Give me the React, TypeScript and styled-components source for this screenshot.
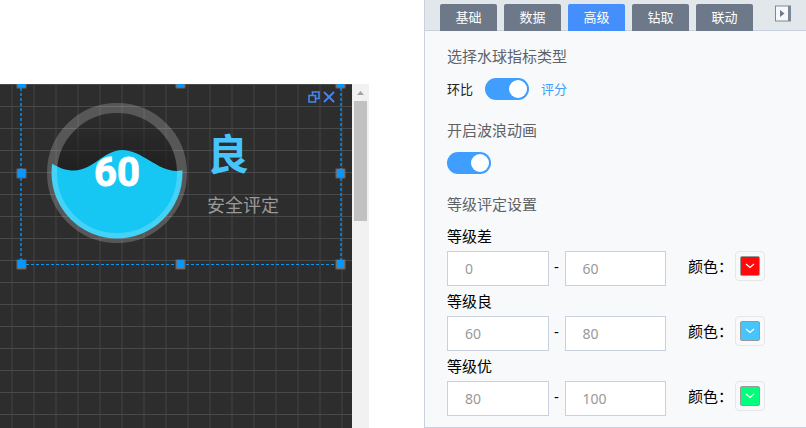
import React, { useState } from "react";
import styled, { createGlobalStyle } from "styled-components";

const GlobalStyle = createGlobalStyle`
  *, *::before, *::after { box-sizing: border-box; }
  body {
    margin: 0;
    background: #fff;
    font-family: "Noto Sans", "Noto Sans CJK SC", sans-serif;
  }
  button, input { font-family: inherit; }
`;

const Page = styled.div`
  display: flex;
  min-height: 100vh;
  overflow: hidden;
`;

const Workspace = styled.main`
  display: flex;
  flex: 1;
  min-width: 0;
  margin: 84px 55px 0 0;
`;

const Canvas = styled.div`
  position: relative;
  flex: 1;
  overflow: hidden;
  background-color: #2d2d2d;
  background-image:
    linear-gradient(to bottom, #494949 1px, transparent 1px),
    linear-gradient(to right, #383838 2px, transparent 2px);
  background-size: 22px 22px;
  background-position: 0 0, 11px 0;
`;

const Selection = styled.section`
  position: absolute;
  left: 20px;
  top: -2px;
  width: 322px;
  height: 182px;
`;

const Outline = styled.svg`
  position: absolute;
  inset: 0;
  width: 100%;
  height: 100%;
  overflow: visible;
`;

const WidgetBody = styled.div`
  display: flex;
  align-items: center;
  gap: 20px;
  height: 100%;
  padding-left: 27px;
`;

const Gauge = styled.svg`
  flex: none;
  width: 140px;
  height: 140px;
`;

const GaugeValue = styled.text`
  font-family: Roboto, sans-serif;
  font-size: 40px;
  font-weight: 700;
  fill: #fff;
  stroke: #fff;
  stroke-width: 1px;
  text-anchor: middle;
`;

const Rating = styled.div`
  display: flex;
  flex-direction: column;
  gap: 16px;
  padding-bottom: 2px;
  font-family: "Noto Sans CJK SC", sans-serif;
`;

const Grade = styled.strong`
  font-size: 42px;
  line-height: 48px;
  color: #48c4fd;
`;

const Caption = styled.span`
  font-size: 18px;
  line-height: 24px;
  color: #999;
`;

const WidgetActions = styled.div`
  position: absolute;
  top: 9px;
  right: 7px;
  display: flex;
  gap: 3px;
`;

const IconButton = styled.button`
  display: flex;
  padding: 0;
  border: 0;
  background: none;
  color: #4486f6;
  cursor: pointer;
`;

const ScrollTrack = styled.div`
  flex: none;
  display: flex;
  flex-direction: column;
  align-items: center;
  width: 17px;
  background: #f1f1f1;
`;

const ScrollArrow = styled.svg`
  width: 17px;
  height: 17px;
`;

const ScrollThumb = styled.div`
  width: 13px;
  height: 120px;
  background: #c1c1c1;
`;

const Panel = styled.aside`
  flex: none;
  width: 382px;
  border: solid #c9d1de;
  border-width: 0 0 1px 1px;
  background: #f7f9fb;
`;

const PanelHeader = styled.header`
  display: flex;
  justify-content: space-between;
  height: 31px;
  padding: 4px 15px 0;
  border-bottom: 1px solid #c9d1de;
  background: #e2e7eb;
`;

const TabList = styled.nav`
  display: flex;
  gap: 7px;
  height: 27px;
`;

const Tab = styled.button<{ $active: boolean }>`
  width: 57px;
  padding: 0;
  border: 0;
  border-radius: 2px 2px 0 0;
  background: ${(p) => (p.$active ? "#458ffc" : "#6d7989")};
  color: #fff;
  font-size: 13px;
  line-height: 27px;
  cursor: pointer;
`;

const CollapseButton = styled(IconButton)`
  align-self: flex-start;
  margin-top: 1px;
`;

const PanelBody = styled.div`
  padding: 13px 41px 11px 22px;
`;

const Group = styled.section`
  margin-bottom: 18px;

  &:last-child { margin-bottom: 0; }
`;

const Heading = styled.h2`
  margin: 0 0 10px;
  font-size: 15px;
  font-weight: 400;
  line-height: 24px;
  color: #606266;
`;

const SwitchRow = styled.div`
  display: flex;
  align-items: center;
  height: 22px;
  gap: 12px;
`;

const SwitchText = styled.label<{ $on?: boolean }>`
  font-size: 13px;
  line-height: 22px;
  color: ${(p) => (p.$on ? "#409eff" : "#222")};
`;

const Switch = styled.input`
  appearance: none;
  display: flex;
  align-items: center;
  width: 44px;
  height: 22px;
  margin: 0;
  padding: 0 2px;
  border-radius: 11px;
  background: #c0ccda;
  cursor: pointer;

  &::before {
    content: "";
    width: 18px;
    height: 18px;
    border-radius: 50%;
    background: #fff;
  }

  &:checked {
    justify-content: flex-end;
    background: #409eff;
  }
`;

const Level = styled.fieldset`
  min-width: 0;
  margin: 0 0 5px;
  padding: 0;
  border: 0;

  &:last-child { margin-bottom: 0; }
`;

const LevelName = styled.legend`
  margin-bottom: 4px;
  padding: 0;
  font-size: 15px;
  line-height: 21px;
  color: #000;
`;

const LevelRow = styled.div`
  display: flex;
  height: 35px;
`;

const RangeInput = styled.input`
  flex: 1;
  min-width: 0;
  padding: 0 17px;
  border: 1px solid #c9d1de;
  border-radius: 0;
  background: #fff;
  color: #999;
  font-size: 14px;
  outline: none;
`;

const Dash = styled.span`
  width: 16px;
  font-size: 15px;
  line-height: 31px;
  text-align: center;
`;

const ColorText = styled.label`
  width: 47px;
  margin-left: 22px;
  font-size: 15px;
  line-height: 31px;
  white-space: nowrap;
  color: #000;
`;

const ColorTrigger = styled.button`
  width: 30px;
  height: 30px;
  padding: 4px;
  border: 1px solid #e6e6e6;
  border-radius: 4px;
  background: none;
  cursor: pointer;
`;

const Swatch = styled.span<{ $color: string }>`
  display: flex;
  align-items: center;
  justify-content: center;
  height: 20px;
  border: 1px solid #999;
  border-radius: 2px;
  background: ${(p) => p.$color};
`;

const tabs = ["基础", "数据", "高级", "钻取", "联动"];

const levels = [
  { id: "poor", name: "等级差", from: "0", to: "60", color: "#ff0a0a" },
  { id: "good", name: "等级良", from: "60", to: "80", color: "#48c4fd" },
  { id: "best", name: "等级优", from: "80", to: "100", color: "#00ff7b" },
];

const handles = [
  [1, 1], [160, 1], [320, 1],
  [1, 91], [320, 91],
  [1, 182], [160, 182], [320, 182],
];

function SelectionOutline() {
  return (
    <Outline aria-hidden="true">
      <path d="M1 1V182M321 1V182" stroke="#1474b8" strokeWidth="2" strokeDasharray="3 2" />
      <path d="M1 182.5H321" stroke="#0c96fb" strokeDasharray="3 2" />
      {handles.map(([x, y]) => (
        <g key={`${x}-${y}`}>
          <rect x={x - 5} y={y - 5} width="11" height="11" rx="2" fill="#8c8c8c" opacity=".3" />
          <rect x={x - 4} y={y - 4} width="9" height="9" rx="1" fill="#777" opacity=".8" />
          <rect x={x - 3} y={y - 4} width="7" height="8" fill="#0698ff" />
        </g>
      ))}
    </Outline>
  );
}

function WaterGauge({ value }: { value: number }) {
  return (
    <Gauge viewBox="0 0 140 140" role="img" aria-label={`${value}`}>
      <defs>
        <linearGradient id="shade" x1="0" y1="0" x2="0" y2="1">
          <stop offset="0" stopColor="#1c1c1c" stopOpacity="0" />
          <stop offset=".55" stopColor="#1c1c1c" stopOpacity=".85" />
        </linearGradient>
        <clipPath id="bowl">
          <circle cx="70" cy="70" r="65.5" />
        </clipPath>
      </defs>
      <circle cx="70" cy="70" r="60" fill="url(#shade)" />
      <path
        clipPath="url(#bowl)"
        d="M4 60C12 65 19 67.5 27 67.5C46 67.5 57 47 75 47C95 47 110 68 130 68L137 67V140H4Z"
        fill="#16c7f4"
      />
      <circle cx="70" cy="70" r="65" fill="none" stroke="#fff" strokeOpacity=".2" strokeWidth="10" />
      <GaugeValue x="70" y="83">{value}</GaugeValue>
    </Gauge>
  );
}

export default function App() {
  const [active, setActive] = useState("高级");

  return (
    <>
      <GlobalStyle />
      <Page>
        <Workspace>
          <Canvas>
            <Selection>
              <WidgetBody>
                <WaterGauge value={60} />
                <Rating>
                  <Grade>良</Grade>
                  <Caption>安全评定</Caption>
                </Rating>
              </WidgetBody>
              <SelectionOutline />
              <WidgetActions>
                <IconButton aria-label="还原">
                  <svg width="12" height="12" viewBox="0 0 12 12" fill="none" stroke="currentColor" strokeWidth="1.6">
                    <path d="M1 4.5H7.5V11H1ZM4.5 4.5V1H11V7.5H7.5" />
                  </svg>
                </IconButton>
                <IconButton aria-label="关闭">
                  <svg width="12" height="12" viewBox="0 0 12 12" fill="none" stroke="currentColor" strokeWidth="1.8">
                    <path d="M1 1L11 11M11 1L1 11" />
                  </svg>
                </IconButton>
              </WidgetActions>
            </Selection>
          </Canvas>
          <ScrollTrack>
            <ScrollArrow viewBox="0 0 17 17" aria-hidden="true">
              <path d="M5 11L8.5 7L12 11Z" fill="#a3a3a3" />
            </ScrollArrow>
            <ScrollThumb />
          </ScrollTrack>
        </Workspace>

        <Panel>
          <PanelHeader>
            <TabList>
              {tabs.map((name) => (
                <Tab key={name} $active={name === active} onClick={() => setActive(name)}>
                  {name}
                </Tab>
              ))}
            </TabList>
            <CollapseButton aria-label="收起">
              <svg width="16" height="17" viewBox="0 0 16 17">
                <rect x=".5" y="1" width="15" height="15" fill="#f7f8fb" stroke="#7b8997" />
                <path d="M13 1H15.5V16H13Z" fill="#7b8997" />
                <path d="M5 5L9.5 8.5L5 12Z" fill="#6d7989" />
              </svg>
            </CollapseButton>
          </PanelHeader>

          <PanelBody>
            <Group>
              <Heading>选择水球指标类型</Heading>
              <SwitchRow>
                <SwitchText htmlFor="metric">环比</SwitchText>
                <Switch id="metric" type="checkbox" role="switch" defaultChecked />
                <SwitchText htmlFor="metric" $on>评分</SwitchText>
              </SwitchRow>
            </Group>
            <Group>
              <Heading id="wave-title">开启波浪动画</Heading>
              <SwitchRow>
                <Switch type="checkbox" role="switch" aria-labelledby="wave-title" defaultChecked />
              </SwitchRow>
            </Group>
            <Group>
              <Heading>等级评定设置</Heading>
              {levels.map((level) => (
                <Level key={level.id}>
                  <LevelName>{level.name}</LevelName>
                  <LevelRow>
                    <RangeInput aria-label={`${level.name} 最小值`} defaultValue={level.from} />
                    <Dash>-</Dash>
                    <RangeInput aria-label={`${level.name} 最大值`} defaultValue={level.to} />
                    <ColorText htmlFor={level.id}>颜色：</ColorText>
                    <ColorTrigger id={level.id}>
                      <Swatch $color={level.color}>
                        <svg width="10" height="6" viewBox="0 0 10 6" fill="none" stroke="#fff" strokeWidth="1.2">
                          <path d="M1 1L5 4.5L9 1" />
                        </svg>
                      </Swatch>
                    </ColorTrigger>
                  </LevelRow>
                </Level>
              ))}
            </Group>
          </PanelBody>
        </Panel>
      </Page>
    </>
  );
}
